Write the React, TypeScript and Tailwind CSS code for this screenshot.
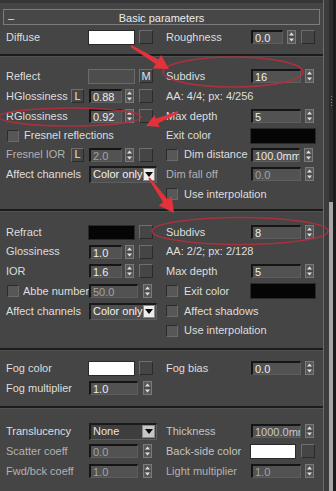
import React from "react";

type Kids = { children?: React.ReactNode };

const Spin = () => (
  <svg width="9" height="14" viewBox="0 0 9 14" className="shrink-0">
    <rect x="0.5" y="0.5" width="8" height="13" fill="#585858" stroke="#7a7a7a" />
    <line x1="1" y1="7" x2="8" y2="7" stroke="#3c3c3c" />
    <path d="M2 5.5 L4.5 2.5 L7 5.5Z" fill="#dedede" />
    <path d="M2 8.5 L4.5 11.5 L7 8.5Z" fill="#dedede" />
  </svg>
);

const Sq = ({ className = "" }: { className?: string }) => (
  <div
    className={`w-[14px] h-[14px] shrink-0 border border-t-[#6e6e6e] border-l-[#6e6e6e] border-b-[#2a2a2a] border-r-[#2a2a2a] ${className}`}
  />
);

const Btn = ({ text, className = "" }: { text: string; className?: string }) => (
  <div
    className={`h-[14px] shrink-0 flex items-center justify-center text-[#e4e4e4] border border-t-[#6e6e6e] border-l-[#6e6e6e] border-b-[#2a2a2a] border-r-[#2a2a2a] ${className}`}
  >
    {text}
  </div>
);

const Label = ({ text, className = "" }: { text: string; className?: string }) => (
  <div className={`shrink-0 whitespace-nowrap ${className}`}>{text}</div>
);

const Num = ({ value, className = "" }: { value: string; className?: string }) => (
  <div
    className={`relative h-[14px] shrink-0 overflow-hidden whitespace-nowrap pl-[2px] leading-[12px] bg-[#525252] border-t-2 border-l-2 border-b border-r border-t-[#151515] border-l-[#151515] border-b-[#5e5e5e] border-r-[#5e5e5e] ${className}`}
  >
    {value}
  </div>
);

const Swatch = ({ className = "" }: { className?: string }) => (
  <div className={`h-[15px] shrink-0 border ${className}`} />
);

const Check = ({ className = "" }: { className?: string }) => (
  <div
    className={`w-[12px] h-[12px] shrink-0 bg-[#575757] border border-t-[#2c2c2c] border-l-[#2c2c2c] border-b-[#6a6a6a] border-r-[#6a6a6a] ${className}`}
  />
);

const Drop = ({ text, light }: { text: string; light?: boolean }) => (
  <div
    className={`w-[68px] h-[17px] shrink-0 flex items-center justify-between border-t-2 border-l-2 border-b border-r border-t-[#1a1a1a] border-l-[#1a1a1a] border-b-[#5e5e5e] border-r-[#5e5e5e] ${
      light ? "bg-[#4e4e4e] text-[#f2f2f2]" : "bg-[#3e3e3e] text-[#e6e6e6]"
    }`}
  >
    <span className="pl-[2px] text-[11px] whitespace-nowrap">{text}</span>
    <div
      className={`w-[13px] h-[13px] mr-[1px] flex items-center justify-center border border-[#8a8a8a] ${
        light ? "bg-[#ececec]" : "bg-[#c6c6c6]"
      }`}
    >
      <svg width="8" height="5" viewBox="0 0 8 5">
        <path d="M0 0 L8 0 L4 5Z" fill="#0a0a0a" />
      </svg>
    </div>
  </div>
);

const Row = ({ left, right, h = "h-[20px]" }: { left?: React.ReactNode; right?: React.ReactNode; h?: string }) => (
  <div className={`grid grid-cols-[166px_157px] items-center ${h}`}>
    <div className="flex items-center pl-[6px]">{left}</div>
    <div className="flex items-center">{right}</div>
  </div>
);

const Sep = () => <div className="h-[3px] border-t-2 border-[#1c1c1c] bg-[#525252]" />;

const Section = ({ children, className = "" }: Kids & { className?: string }) => (
  <div className={className}>{children}</div>
);

// red brush arrow as a polygon, tail -> tip
function arrow(x1: number, y1: number, x2: number, y2: number, hl: number, hw: number) {
  const dx = x2 - x1;
  const dy = y2 - y1;
  const len = Math.hypot(dx, dy);
  const ux = dx / len;
  const uy = dy / len;
  const px = -uy;
  const py = ux;
  const bx = x2 - ux * hl;
  const by = y2 - uy * hl;
  const p = (x: number, y: number) => `${x.toFixed(1)},${y.toFixed(1)}`;
  return [
    p(x1 - px * 1, y1 - py * 1),
    p(bx - px * 2.6, by - py * 2.6),
    p(bx - px * hw, by - py * hw),
    p(x2, y2),
    p(bx + px * hw, by + py * hw),
    p(bx + px * 2.6, by + py * 2.6),
    p(x1 + px * 1, y1 + py * 1),
  ].join(" ");
}

export default function App() {
  const dim = "text-[#b2b2b2]";
  const dimVal = "text-[#a2a2a2]";
  return (
    <div className="relative w-[336px] h-[491px] overflow-hidden flex bg-[#454545] text-[11px] text-[#dedede] font-['Liberation_Sans',Arial,sans-serif]">
      <div className="w-[323px] flex flex-col">
        <div className="h-[3px] bg-[#363636]" />
        <div className="h-[6px]" />
        <div className="mx-[3px] h-[16px] border border-[#7c7c7c] bg-[#474747] grid grid-cols-[20px_1fr_20px] items-center">
          <span className="pl-[4px] leading-none text-[#e8e8e8]">–</span>
          <span className="text-center text-[#ececec]">Basic parameters</span>
          <span />
        </div>

        <Section className="pt-[2px] pb-[7px]">
          <Row
            left={
              <>
                <Label text="Diffuse" className="w-[82px]" />
                <Swatch className="w-[47px] bg-white border-[#2a2a2a]" />
                <Sq className="ml-[4px]" />
              </>
            }
            right={
              <>
                <Label text="Roughness" className="w-[85px]" />
                <Num value="0.0" className="w-[32px] text-[#ececec]" />
                <div className="ml-[4px]"><Spin /></div>
                <Sq className="ml-[5px]" />
              </>
            }
          />
        </Section>
        <Sep />

        <Section className="pt-[9px] pb-[5px]">
          <Row
            left={
              <>
                <Label text="Reflect" className="w-[82px]" />
                <Swatch className="w-[47px] bg-[#4d4d4d] border-[#6a6a6a]" />
                <Btn text="M" className="ml-[4px] w-[14px]" />
              </>
            }
            right={
              <>
                <Label text="Subdivs" className="w-[85px]" />
                <Num value="16" className="w-[50px] text-[#f0f0f0]" />
                <div className="ml-[4px]"><Spin /></div>
              </>
            }
          />
          <Row
            left={
              <>
                <Label text="HGlossiness" className="w-[65px]" />
                <Btn text="L" className="w-[13px]" />
                <Num value="0.88" className="ml-[5px] w-[33px] text-[#ececec]" />
                <div className="ml-[3px]"><Spin /></div>
                <Sq className="ml-[5px]" />
              </>
            }
            right={<Label text="AA: 4/4; px: 4/256" />}
          />
          <Row
            left={
              <>
                <Label text="RGlossiness" className="w-[83px]" />
                <Num value="0.92" className="w-[33px] text-[#ececec]" />
                <div className="ml-[3px]"><Spin /></div>
                <Sq className="ml-[5px]" />
              </>
            }
            right={
              <>
                <Label text="Max depth" className="w-[85px]" />
                <Num value="5" className="w-[50px] text-[#f0f0f0]" />
                <div className="ml-[4px]"><Spin /></div>
              </>
            }
          />
          <Row
            h="h-[19px]"
            left={
              <>
                <Check className="ml-[1px]" />
                <Label text="Fresnel reflections" className="ml-[5px]" />
              </>
            }
            right={
              <>
                <Label text="Exit color" className="w-[84px]" />
                <Swatch className="w-[66px] h-[16px] bg-[#050505] border-[#2a2a2a]" />
              </>
            }
          />
          <Row
            h="h-[19px]"
            left={
              <>
                <Label text="Fresnel IOR" className={`w-[65px] ${dim}`} />
                <Btn text="L" className="w-[13px]" />
                <Num value="2.0" className={`ml-[5px] w-[33px] ${dimVal}`} />
                <div className="ml-[3px]"><Spin /></div>
                <Sq className="ml-[5px]" />
              </>
            }
            right={
              <>
                <Check />
                <Label text="Dim distance" className="ml-[6px] w-[67px]" />
                <Num value="100.0mm" className="w-[49px] text-[#e6e6e6]" />
                <div className="ml-[4px]"><Spin /></div>
              </>
            }
          />
          <Row
            left={
              <>
                <Label text="Affect channels" className="w-[83px]" />
                <Drop text="Color only" light />
              </>
            }
            right={
              <>
                <Label text="Dim fall off" className={`w-[85px] ${dim}`} />
                <Num value="0.0" className={`w-[50px] ${dimVal}`} />
                <div className="ml-[4px]"><Spin /></div>
              </>
            }
          />
          <Row
            right={
              <>
                <Check />
                <Label text="Use interpolation" className="ml-[6px]" />
              </>
            }
          />
        </Section>
        <Sep />

        <Section className="pt-[10px] pb-[8px]">
          <Row
            left={
              <>
                <Label text="Refract" className="w-[82px]" />
                <Swatch className="w-[47px] bg-[#050505] border-[#2a2a2a]" />
                <Sq className="ml-[4px]" />
              </>
            }
            right={
              <>
                <Label text="Subdivs" className="w-[85px]" />
                <Num value="8" className="w-[50px] text-[#f0f0f0]" />
                <div className="ml-[4px]"><Spin /></div>
              </>
            }
          />
          <Row
            h="h-[19px]"
            left={
              <>
                <Label text="Glossiness" className="w-[83px]" />
                <Num value="1.0" className="w-[33px] text-[#ececec]" />
                <div className="ml-[3px]"><Spin /></div>
                <Sq className="ml-[5px]" />
              </>
            }
            right={<Label text="AA: 2/2; px: 2/128" />}
          />
          <Row
            left={
              <>
                <Label text="IOR" className="w-[83px]" />
                <Num value="1.6" className="w-[33px] text-[#ececec]" />
                <div className="ml-[3px]"><Spin /></div>
                <Sq className="ml-[5px]" />
              </>
            }
            right={
              <>
                <Label text="Max depth" className="w-[85px]" />
                <Num value="5" className="w-[50px] text-[#f0f0f0]" />
                <div className="ml-[4px]"><Spin /></div>
              </>
            }
          />
          <Row
            left={
              <>
                <Check className="ml-[1px]" />
                <Label text="Abbe number" className="ml-[4px] w-[66px]" />
                <Num value="50.0" className={`w-[49px] ${dimVal}`} />
                <div className="ml-[5px]"><Spin /></div>
              </>
            }
            right={
              <>
                <Check />
                <Label text="Exit color" className="ml-[6px] w-[66px]" />
                <Swatch className="w-[66px] h-[16px] bg-[#050505] border-[#2a2a2a]" />
              </>
            }
          />
          <Row
            left={
              <>
                <Label text="Affect channels" className="w-[83px]" />
                <Drop text="Color only" light />
              </>
            }
            right={
              <>
                <Check />
                <Label text="Affect shadows" className="ml-[6px]" />
              </>
            }
          />
          <Row
            h="h-[19px]"
            right={
              <>
                <Check />
                <Label text="Use interpolation" className="ml-[6px]" />
              </>
            }
          />
        </Section>
        <Sep />

        <Section className="pt-[7px] pb-[8px]">
          <Row
            left={
              <>
                <Label text="Fog color" className="w-[82px]" />
                <Swatch className="w-[47px] bg-white border-[#2a2a2a]" />
                <Sq className="ml-[4px]" />
              </>
            }
            right={
              <>
                <Label text="Fog bias" className="w-[85px]" />
                <Num value="0.0" className="w-[50px] text-[#ececec]" />
                <div className="ml-[4px]"><Spin /></div>
              </>
            }
          />
          <Row
            left={
              <>
                <Label text="Fog multiplier" className="w-[83px]" />
                <Num value="1.0" className="w-[49px] text-[#ececec]" />
                <div className="ml-[5px]"><Spin /></div>
              </>
            }
          />
        </Section>
        <Sep />

        <Section className="pt-[12px]">
          <Row
            left={
              <>
                <Label text="Translucency" className="w-[83px]" />
                <Drop text="None" />
              </>
            }
            right={
              <>
                <Label text="Thickness" className="w-[85px] text-[#c4c4c4]" />
                <Num value="1000.0mm" className="w-[50px] text-[#c8c8c8]" />
                <div className="ml-[4px]"><Spin /></div>
              </>
            }
          />
          <Row
            left={
              <>
                <Label text="Scatter coeff" className={`w-[83px] ${dim}`} />
                <Num value="0.0" className={`w-[49px] ${dimVal}`} />
                <div className="ml-[5px]"><Spin /></div>
              </>
            }
            right={
              <>
                <Label text="Back-side color" className="w-[84px] text-[#c4c4c4]" />
                <Swatch className="w-[46px] bg-white border-[#2a2a2a]" />
                <Sq className="ml-[5px]" />
              </>
            }
          />
          <Row
            left={
              <>
                <Label text="Fwd/bck coeff" className={`w-[83px] ${dim}`} />
                <Num value="1.0" className={`w-[49px] ${dimVal}`} />
                <div className="ml-[5px]"><Spin /></div>
              </>
            }
            right={
              <>
                <Label text="Light multiplier" className={`w-[85px] ${dim}`} />
                <Num value="1.0" className={`w-[50px] ${dimVal}`} />
                <div className="ml-[4px]"><Spin /></div>
              </>
            }
          />
        </Section>
      </div>

      {/* scroll strip */}
      <div className="w-[13px] flex border-l border-[#6c6c6c]">
        <div className="w-[5px] bg-[#3c3c3c]" />
        <div className="w-[4px] flex flex-col">
          <div className="h-[202px] bg-[#2c2c2c] flex flex-col items-center justify-center gap-[2px]">
            <div className="w-[1px] h-[1px] bg-[#8a8a8a]" />
            <div className="w-[1px] h-[1px] bg-[#8a8a8a]" />
            <div className="w-[1px] h-[1px] bg-[#8a8a8a]" />
            <div className="w-[1px] h-[1px] bg-[#8a8a8a]" />
          </div>
          <div className="flex-1 bg-[#a6a6a6]" />
        </div>
        <div className="w-[3px] bg-[#1c1c1c]" />
      </div>

      {/* red annotations */}
      <svg className="absolute inset-0 pointer-events-none" width="336" height="491" viewBox="0 0 336 491">
        <g fill="none" stroke="#b2303e" strokeWidth="1.6" opacity="0.9">
          <ellipse cx="233" cy="72" rx="70" ry="15" />
          <ellipse cx="70" cy="117" rx="71" ry="9" />
          <ellipse cx="240" cy="231" rx="88" ry="13.5" />
        </g>
        <g fill="#e4323c">
          <polygon points={arrow(131, 46, 169, 69, 14, 8)} />
          <polygon points={arrow(178, 112, 146, 126, 12, 6.5)} />
          <polygon points={arrow(149, 178, 174, 213, 15, 8)} />
        </g>
      </svg>
    </div>
  );
}
